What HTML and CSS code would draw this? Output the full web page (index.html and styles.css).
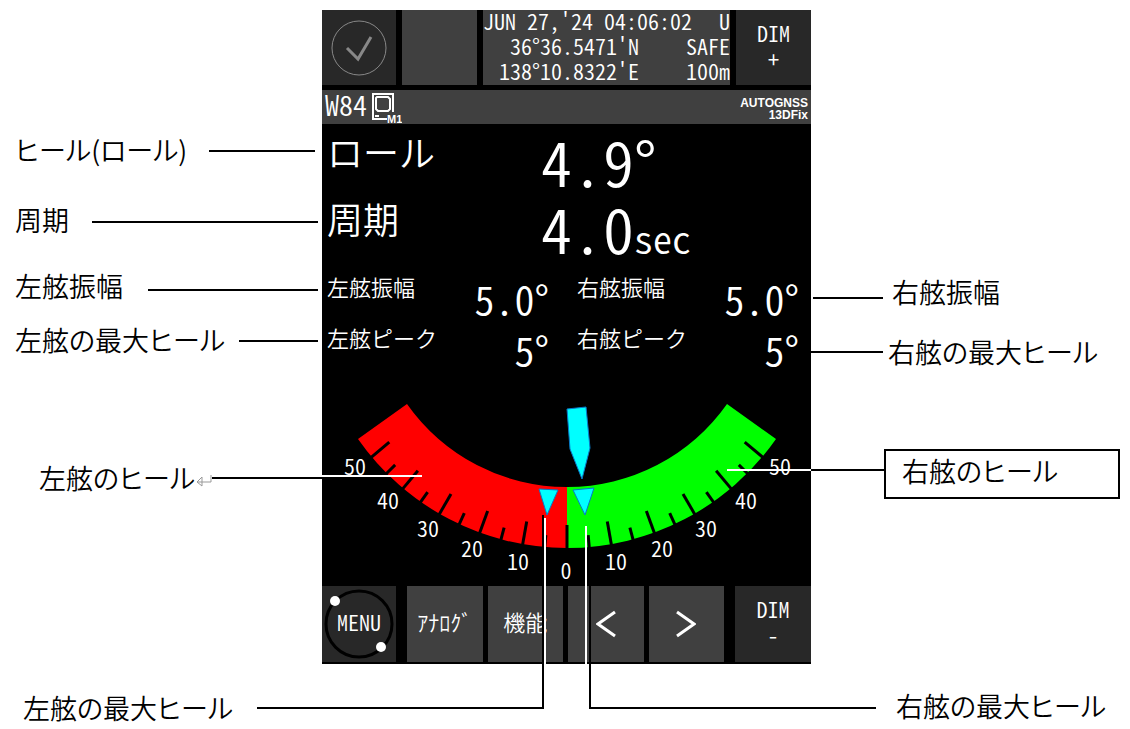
FILE: index.html
```html
<!DOCTYPE html>
<html lang="ja">
  <head>
    <meta charset="UTF-8" />
    <meta name="viewport" content="width=device-width, initial-scale=1.0" />
    <title>ヒール表示</title>
    <link rel="stylesheet" href="styles.css">
  </head>
  <body>
    <main class="figure">
      <div class="notes notes-left">
        <p class="note">ヒール(ロール)</p>
        <p class="note note-period">周期</p>
        <p class="note note-amplitude">左舷振幅</p>
        <p class="note note-peak">左舷の最大ヒール</p>
        <p class="note note-heel">左舷のヒール<svg class="return" viewBox="0 0 18 16" aria-hidden="true"><path d="M16 2v7H3M7 4L2 9l5 4M7 4v9" /></svg></p>
        <p class="note note-bottom">左舷の最大ヒール</p>
      </div>

      <div class="device">
        <div class="top-bar">
          <button class="key key-dark" aria-label="OK">
            <svg class="check" viewBox="0 0 56 56">
              <circle cx="28" cy="28" r="27" />
              <path class="tick" d="M16 28l11 11 13-22" />
            </svg>
          </button>
          <div class="key"></div>
          <div class="position">
            <div class="line"><span>JUN 27,'24 04:06:02</span><span>U</span></div>
            <div class="line"><span class="coord">36°36.5471'N</span><span>SAFE</span></div>
            <div class="line"><span class="coord">138°10.8322'E</span><span>100m</span></div>
          </div>
          <button class="key key-dark key-text key-dim"><span>DIM</span><span>+</span></button>
        </div>

        <div class="status-bar">
          <span class="page-name">W84</span>
          <svg class="monitor" viewBox="0 0 31 33">
            <path d="M16 28H2V3h20v18" fill="none" stroke="#fff" stroke-width="2" />
            <path d="M6 6h11l2 2v10l-2 2H7l-2-2V7z" fill="none" stroke="#fff" stroke-width="2" />
            <path d="M4 25h4" stroke="#fff" stroke-width="2" />
            <text x="16" y="32">M1</text>
          </svg>
          <div class="fix"><span>AUTOGNSS</span><span>13DFix</span></div>
        </div>

        <div class="readings">
          <div class="main-reading">
            <span class="main-label">ロール</span>
            <span class="main-value">4.9°</span>
          </div>
          <div class="main-reading">
            <span class="main-label">周期</span>
            <span class="main-value">4.0<span class="unit">sec</span></span>
          </div>
          <div class="sides">
            <div class="side"><span>左舷振幅</span><span class="side-value">5.0°</span></div>
            <div class="side"><span>右舷振幅</span><span class="side-value">5.0°</span></div>
            <div class="side"><span>左舷ピーク</span><span class="side-value">5°</span></div>
            <div class="side"><span>右舷ピーク</span><span class="side-value">5°</span></div>
          </div>
        </div>

        <svg class="gauge" viewBox="0 0 489 206">
          <path fill="#f00" d="M245 168A255 255 0 0 1 36 59L85 24A195 195 0 0 0 245 107z" />
          <path fill="#0f0" d="M245 168A255 255 0 0 0 454 59L405 24A195 195 0 0 1 245 107z" />
          <g id="ticks"></g>
          <path class="cyan" d="M245 29l19-2 4 41-8 31-12-30z" />
          <path class="cyan" d="M217 109l19 1-11 25z" />
          <path class="cyan" d="M251 110l21-2-9 27z" />
          <g class="scale">
            <text x="33" y="95">50</text>
            <text x="66" y="129">40</text>
            <text x="106" y="157">30</text>
            <text x="150" y="177">20</text>
            <text x="196" y="190">10</text>
            <text x="244" y="199">0</text>
            <text x="294" y="190">10</text>
            <text x="340" y="177">20</text>
            <text x="384" y="157">30</text>
            <text x="424" y="129">40</text>
            <text x="458" y="95">50</text>
          </g>
        </svg>

        <div class="bottom-bar">
          <button class="key key-dark key-text menu">
            <svg class="dial" viewBox="0 0 74 76" aria-hidden="true">
              <circle cx="37" cy="38" r="33" fill="none" stroke="#000" stroke-width="3" />
              <circle cx="13" cy="15" r="5" fill="#fff" />
              <circle cx="59" cy="61" r="5" fill="#fff" />
            </svg>
            <span class="menu-text">MENU</span>
          </button>
          <div class="soft-keys">
            <button class="key key-text">ｱﾅﾛｸﾞ</button>
            <button class="key key-text">機能</button>
            <button class="key" aria-label="前へ"><svg class="arrow" viewBox="0 0 20 28"><path d="M19 2L2 14l17 12" /></svg></button>
            <button class="key" aria-label="次へ"><svg class="arrow" viewBox="0 0 20 28"><path d="M1 2l17 12L1 26" /></svg></button>
          </div>
          <button class="key key-dark key-text key-dim"><span>DIM</span><span>-</span></button>
        </div>
      </div>

      <div class="notes notes-right">
        <p class="note note-amplitude">右舷振幅</p>
        <p class="note note-peak">右舷の最大ヒール</p>
        <p class="note note-heel">右舷のヒール</p>
        <p class="note note-bottom">右舷の最大ヒール</p>
      </div>

      <!-- leader lines, drawn over the device -->
      <svg class="leaders" viewBox="0 0 1130 729" aria-hidden="true">
        <path d="M209 151H315M92 222H318M148 290H318M239 341H318M212 478H322" />
        <path d="M813 298H883M811 352H883M811 470H885" />
        <path d="M543 515V708H257M590 548V708H876" />
        <path class="light" d="M322 476H422M727 470H811M545 518V664M586 526V664" />
      </svg>
    </main>

    <script>
      // scale marks every 5 degrees, long ones every 10
      const ticks = document.getElementById("ticks");

      for (let angle = -50; angle <= 50; angle += 5) {
        const tick = document.createElementNS("http://www.w3.org/2000/svg", "line");
        tick.setAttribute("x1", 245);
        tick.setAttribute("x2", 245);
        tick.setAttribute("y1", angle % 10 === 0 ? 145 : 156);
        tick.setAttribute("y2", 169);
        tick.setAttribute("transform", `rotate(${angle} 245 -87)`);
        ticks.appendChild(tick);
      }
    </script>
  </body>
</html>
```

FILE: styles.css
```css
* {
  margin: 0;
  padding: 0;
  box-sizing: border-box;
}

body {
  font-family: "Noto Sans CJK JP", sans-serif;
  background: white;
  color: black;
}

.figure {
  position: relative;
  display: grid;
  grid-template-columns: 322fr 489fr 319fr;
  align-items: start;
}

/* callouts */
.note {
  font-size: 27px;
  font-weight: 350;
  font-feature-settings: "palt";
  line-height: 40px;
  white-space: nowrap;
}

.notes-left {
  padding: 130px 0 0 15px;
}

.notes-right {
  padding: 272px 10px 0 73px;
}

.note-period {
  margin-top: 30px;
}

.note-amplitude {
  margin-top: 26px;
}

.note-peak {
  margin-top: 14px;
}

.note-heel {
  margin: 98px 0 0 24px;
}

.note-bottom {
  margin: 190px 0 0 8px;
}

.notes-right .note-amplitude {
  margin: 0 0 0 8px;
}

.notes-right .note-peak {
  margin: 20px 0 0 4px;
}

.notes-right .note-heel {
  margin: 77px 0 0;
  padding: 0 16px 6px;
  border: 2px solid black;
}

.notes-right .note-bottom {
  margin: 187px 0 0 12px;
}

.return {
  width: 18px;
  height: 16px;
  fill: none;
  stroke: #999;
}

.leaders {
  position: absolute;
  top: 0;
  left: 0;
  width: 100%;
  pointer-events: none;
  fill: none;
  stroke: black;
  stroke-width: 2;
}

.leaders .light {
  stroke: white;
}

/* device */
.device {
  margin-top: 10px;
  padding-bottom: 2px;
  background: black;
  color: white;
  font-size: 22px;
  font-weight: 350;
  font-feature-settings: "hwid";
}

.key {
  display: flex;
  align-items: center;
  justify-content: center;
  background: #404040;
  color: white;
  border: none;
  font: inherit;
  font-feature-settings: inherit;
  line-height: 26px;
}

.key-dark {
  background: #282828;
}

.key-text {
  padding-bottom: 6px;
}

.key-dim {
  flex-direction: column;
}

.top-bar {
  display: grid;
  grid-template-columns: 74fr 75fr 247fr 75fr;
  gap: 6px;
  height: 74px;
}

.check {
  width: 56px;
  height: 56px;
  fill: none;
  stroke: #888;
  stroke-width: 1;
}

.check .tick {
  stroke-width: 3;
}

.position {
  background: #404040;
}

.line {
  display: flex;
  justify-content: space-between;
  height: 25px;
  line-height: 20px;
}

.coord {
  width: 156px;
  text-align: right;
}

.status-bar {
  display: flex;
  align-items: center;
  height: 34px;
  margin-top: 6px;
  padding: 0 3px;
  background: #404040;
}

.page-name {
  height: 34px;
  font-size: 28px;
  line-height: 28px;
}

.monitor {
  width: 31px;
  height: 33px;
  margin-left: 4px;
}

.monitor text {
  fill: white;
  font: bold 11px "Liberation Sans", sans-serif;
}

.fix {
  display: flex;
  flex-direction: column;
  align-items: flex-end;
  margin-left: auto;
  padding-top: 3px;
  font: bold 12px "Liberation Sans", sans-serif;
  line-height: 12px;
}

.readings {
  padding: 0 12px 0 5px;
}

.main-reading {
  display: grid;
  grid-template-columns: 214px 1fr;
  height: 67px;
}

.main-label {
  font-size: 36px;
  line-height: 54px;
}

.main-value {
  font-size: 62px;
  line-height: 72px;
  white-space: nowrap;
}

.unit {
  font-size: 38px;
}

.sides {
  display: grid;
  grid-template-columns: 1fr 1fr;
  column-gap: 28px;
  margin-top: 13px;
}

.side {
  display: flex;
  justify-content: space-between;
  height: 51px;
  line-height: 31px;
}

.side-value {
  font-size: 40px;
  line-height: 54px;
}

.gauge {
  display: block;
  width: 100%;
  margin-top: 7px;
}

.gauge line {
  stroke: black;
  stroke-width: 3;
}

.cyan {
  fill: cyan;
  stroke: #0878c8;
}

.scale {
  fill: white;
  text-anchor: middle;
}

.bottom-bar {
  display: grid;
  grid-template-columns: 74fr 317fr 76fr;
  column-gap: 11px;
  height: 76px;
}

.soft-keys {
  display: grid;
  grid-template-columns: repeat(4, 1fr);
  gap: 5px;
}

.menu {
  position: relative;
}

.menu-text {
  position: relative;
}

.dial {
  position: absolute;
  top: 0;
  left: 0;
  width: 100%;
  height: 100%;
}

.arrow {
  width: 20px;
  height: 28px;
  fill: none;
  stroke: white;
  stroke-width: 3;
}
```
